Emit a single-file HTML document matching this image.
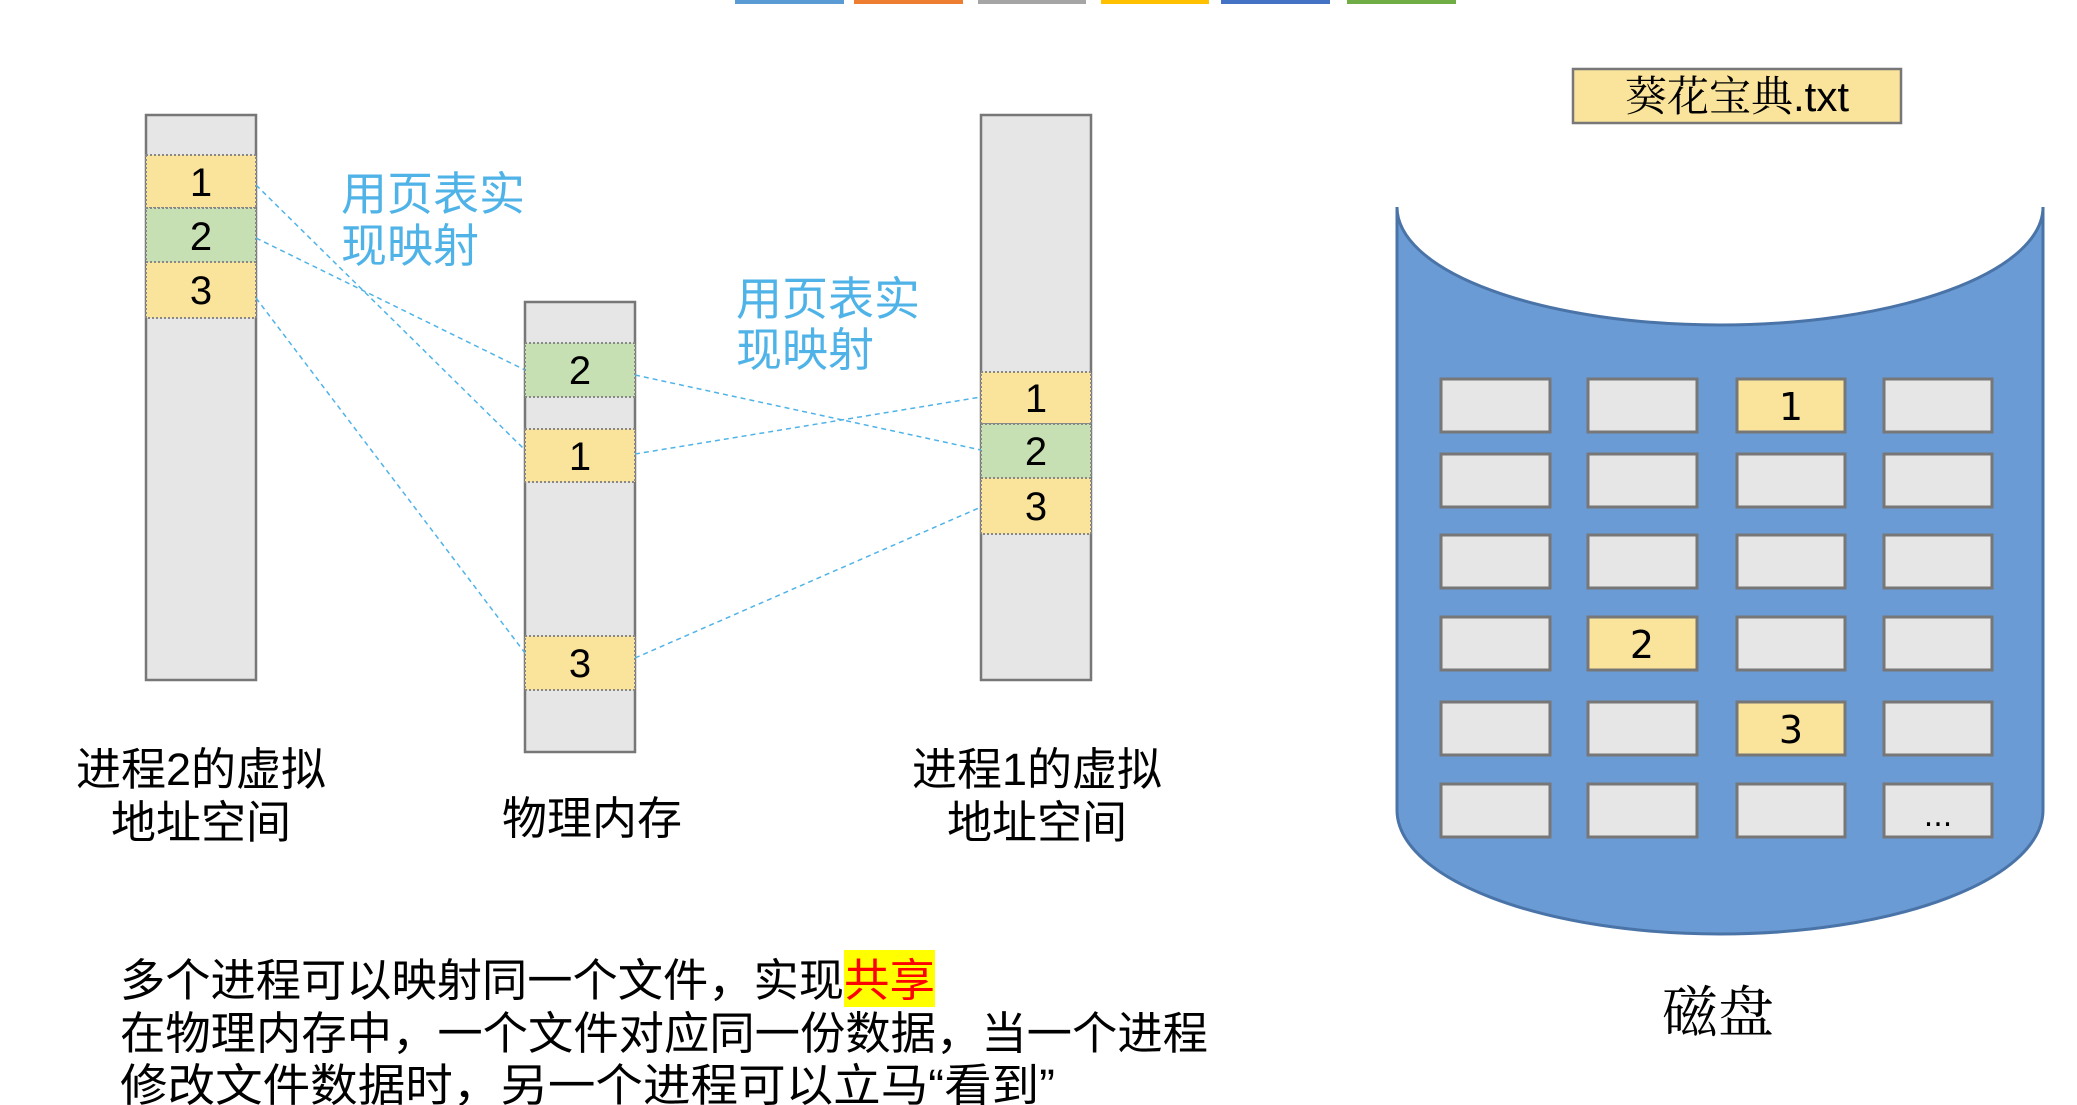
<!DOCTYPE html>
<html><head><meta charset="utf-8"><style>
html,body{margin:0;padding:0;background:#fff;}
body{width:2077px;height:1105px;overflow:hidden;position:relative;font-family:"Liberation Sans","Noto Sans CJK SC",sans-serif;}
svg{position:absolute;left:0;top:0;}
</style></head><body>
<svg width="2077" height="1105" viewBox="0 0 2077 1105" xmlns="http://www.w3.org/2000/svg">
<g>
<rect x="735" y="0" width="109" height="4" fill="#5b9bd5"/>
<rect x="854" y="0" width="109" height="4" fill="#ed7d31"/>
<rect x="978" y="0" width="108" height="4" fill="#a5a5a5"/>
<rect x="1101" y="0" width="108" height="4" fill="#ffc000"/>
<rect x="1221" y="0" width="109" height="4" fill="#4472c4"/>
<rect x="1347" y="0" width="109" height="4" fill="#70ad47"/>
</g>
<g stroke="#777" stroke-width="2.5">
<rect x="146" y="115" width="110" height="565" fill="#e6e6e6"/>
<rect x="525" y="302" width="110" height="450" fill="#e6e6e6"/>
<rect x="981" y="115" width="110" height="565" fill="#e6e6e6"/>
</g>
<g stroke="#888" stroke-width="2" stroke-dasharray="2 2">
<rect x="146" y="155" width="110" height="53" fill="#fae49b"/>
<rect x="146" y="208" width="110" height="54" fill="#c6e0b4"/>
<rect x="146" y="262" width="110" height="56" fill="#fae49b"/>
<rect x="525" y="343" width="110" height="54" fill="#c6e0b4"/>
<rect x="525" y="429" width="110" height="53" fill="#fae49b"/>
<rect x="525" y="636" width="110" height="54" fill="#fae49b"/>
<rect x="981" y="372" width="110" height="52" fill="#fae49b"/>
<rect x="981" y="424" width="110" height="54" fill="#c6e0b4"/>
<rect x="981" y="478" width="110" height="56" fill="#fae49b"/>
</g>
<g font-size="40" text-anchor="middle" fill="#000">
<text x="201" y="196">1</text><text x="201" y="250">2</text><text x="201" y="304">3</text>
<text x="580" y="384">2</text><text x="580" y="470">1</text><text x="580" y="677">3</text>
<text x="1036" y="412">1</text><text x="1036" y="465">2</text><text x="1036" y="520">3</text>
</g>
<g stroke="#4fb3e8" stroke-width="1.5" stroke-dasharray="5 4" fill="none">
<line x1="256" y1="185" x2="525" y2="450"/>
<line x1="256" y1="238" x2="525" y2="370"/>
<line x1="256" y1="298" x2="525" y2="653"/>
<line x1="635" y1="375" x2="981" y2="450"/>
<line x1="635" y1="454" x2="981" y2="397"/>
<line x1="635" y1="658" x2="981" y2="507"/>
</g>
<g font-size="46" fill="#4fb3e8">
<text x="341" y="210">用页表实</text><text x="341" y="262">现映射</text>
<text x="736" y="315">用页表实</text><text x="736" y="366">现映射</text>
</g>
<g font-size="45" fill="#000" text-anchor="middle">
<text x="201" y="785">进程2的虚拟</text><text x="201" y="838">地址空间</text>
<text x="592" y="834">物理内存</text>
<text x="1037" y="785">进程1的虚拟</text><text x="1037" y="838">地址空间</text>
</g>
<path d="M1397,207 L1397,810 A323,124 0 0 0 2043,810 L2043,207 A323,118 0 0 1 1397,207 Z" fill="#6a9bd4" stroke="#4a74a8" stroke-width="3"/>
<rect x="1573" y="69" width="328" height="54" fill="#fae49b" stroke="#777" stroke-width="2.5"/>
<text x="1737" y="111" font-size="42" text-anchor="middle" font-family="Liberation Serif,Noto Serif CJK SC,serif">葵花宝典<tspan font-family="Liberation Sans,sans-serif">.txt</tspan></text>
<g stroke="#777" stroke-width="3" fill="#e6e6e6">
<rect x="1441" y="379" width="109" height="53"/><rect x="1588" y="379" width="109" height="53"/><rect x="1737" y="379" width="108" height="53" fill="#fae49b"/><rect x="1884" y="379" width="108" height="53"/>
<rect x="1441" y="454" width="109" height="53"/><rect x="1588" y="454" width="109" height="53"/><rect x="1737" y="454" width="108" height="53"/><rect x="1884" y="454" width="108" height="53"/>
<rect x="1441" y="535" width="109" height="53"/><rect x="1588" y="535" width="109" height="53"/><rect x="1737" y="535" width="108" height="53"/><rect x="1884" y="535" width="108" height="53"/>
<rect x="1441" y="617" width="109" height="53"/><rect x="1588" y="617" width="109" height="53" fill="#fae49b"/><rect x="1737" y="617" width="108" height="53"/><rect x="1884" y="617" width="108" height="53"/>
<rect x="1441" y="702" width="109" height="53"/><rect x="1588" y="702" width="109" height="53"/><rect x="1737" y="702" width="108" height="53" fill="#fae49b"/><rect x="1884" y="702" width="108" height="53"/>
<rect x="1441" y="784" width="109" height="53"/><rect x="1588" y="784" width="109" height="53"/><rect x="1737" y="784" width="108" height="53"/><rect x="1884" y="784" width="108" height="53"/>
</g>
<g font-size="38" text-anchor="middle" fill="#000" font-family="DejaVu Sans,sans-serif">
<text x="1791" y="420">1</text><text x="1642" y="658">2</text><text x="1791" y="743">3</text><text x="1938" y="826" font-size="30">...</text>
</g>
<text x="1718" y="1032" font-size="56" text-anchor="middle" font-family="Noto Serif CJK SC,serif">磁盘</text>
<rect x="844" y="950" width="91" height="57" fill="#ffff00"/>
<g font-size="45" fill="#000">
<text x="120" y="996" textLength="724" lengthAdjust="spacingAndGlyphs">多个进程可以映射同一个文件，实现</text>
<text x="844" y="996" fill="#ff0000" textLength="91" lengthAdjust="spacingAndGlyphs">共享</text>
<text x="120" y="1049" textLength="1088" lengthAdjust="spacingAndGlyphs">在物理内存中，一个文件对应同一份数据，当一个进程</text>
<text x="120" y="1101" textLength="935" lengthAdjust="spacingAndGlyphs">修改文件数据时，另一个进程可以立马“看到”</text>
</g>
</svg>
</body></html>
